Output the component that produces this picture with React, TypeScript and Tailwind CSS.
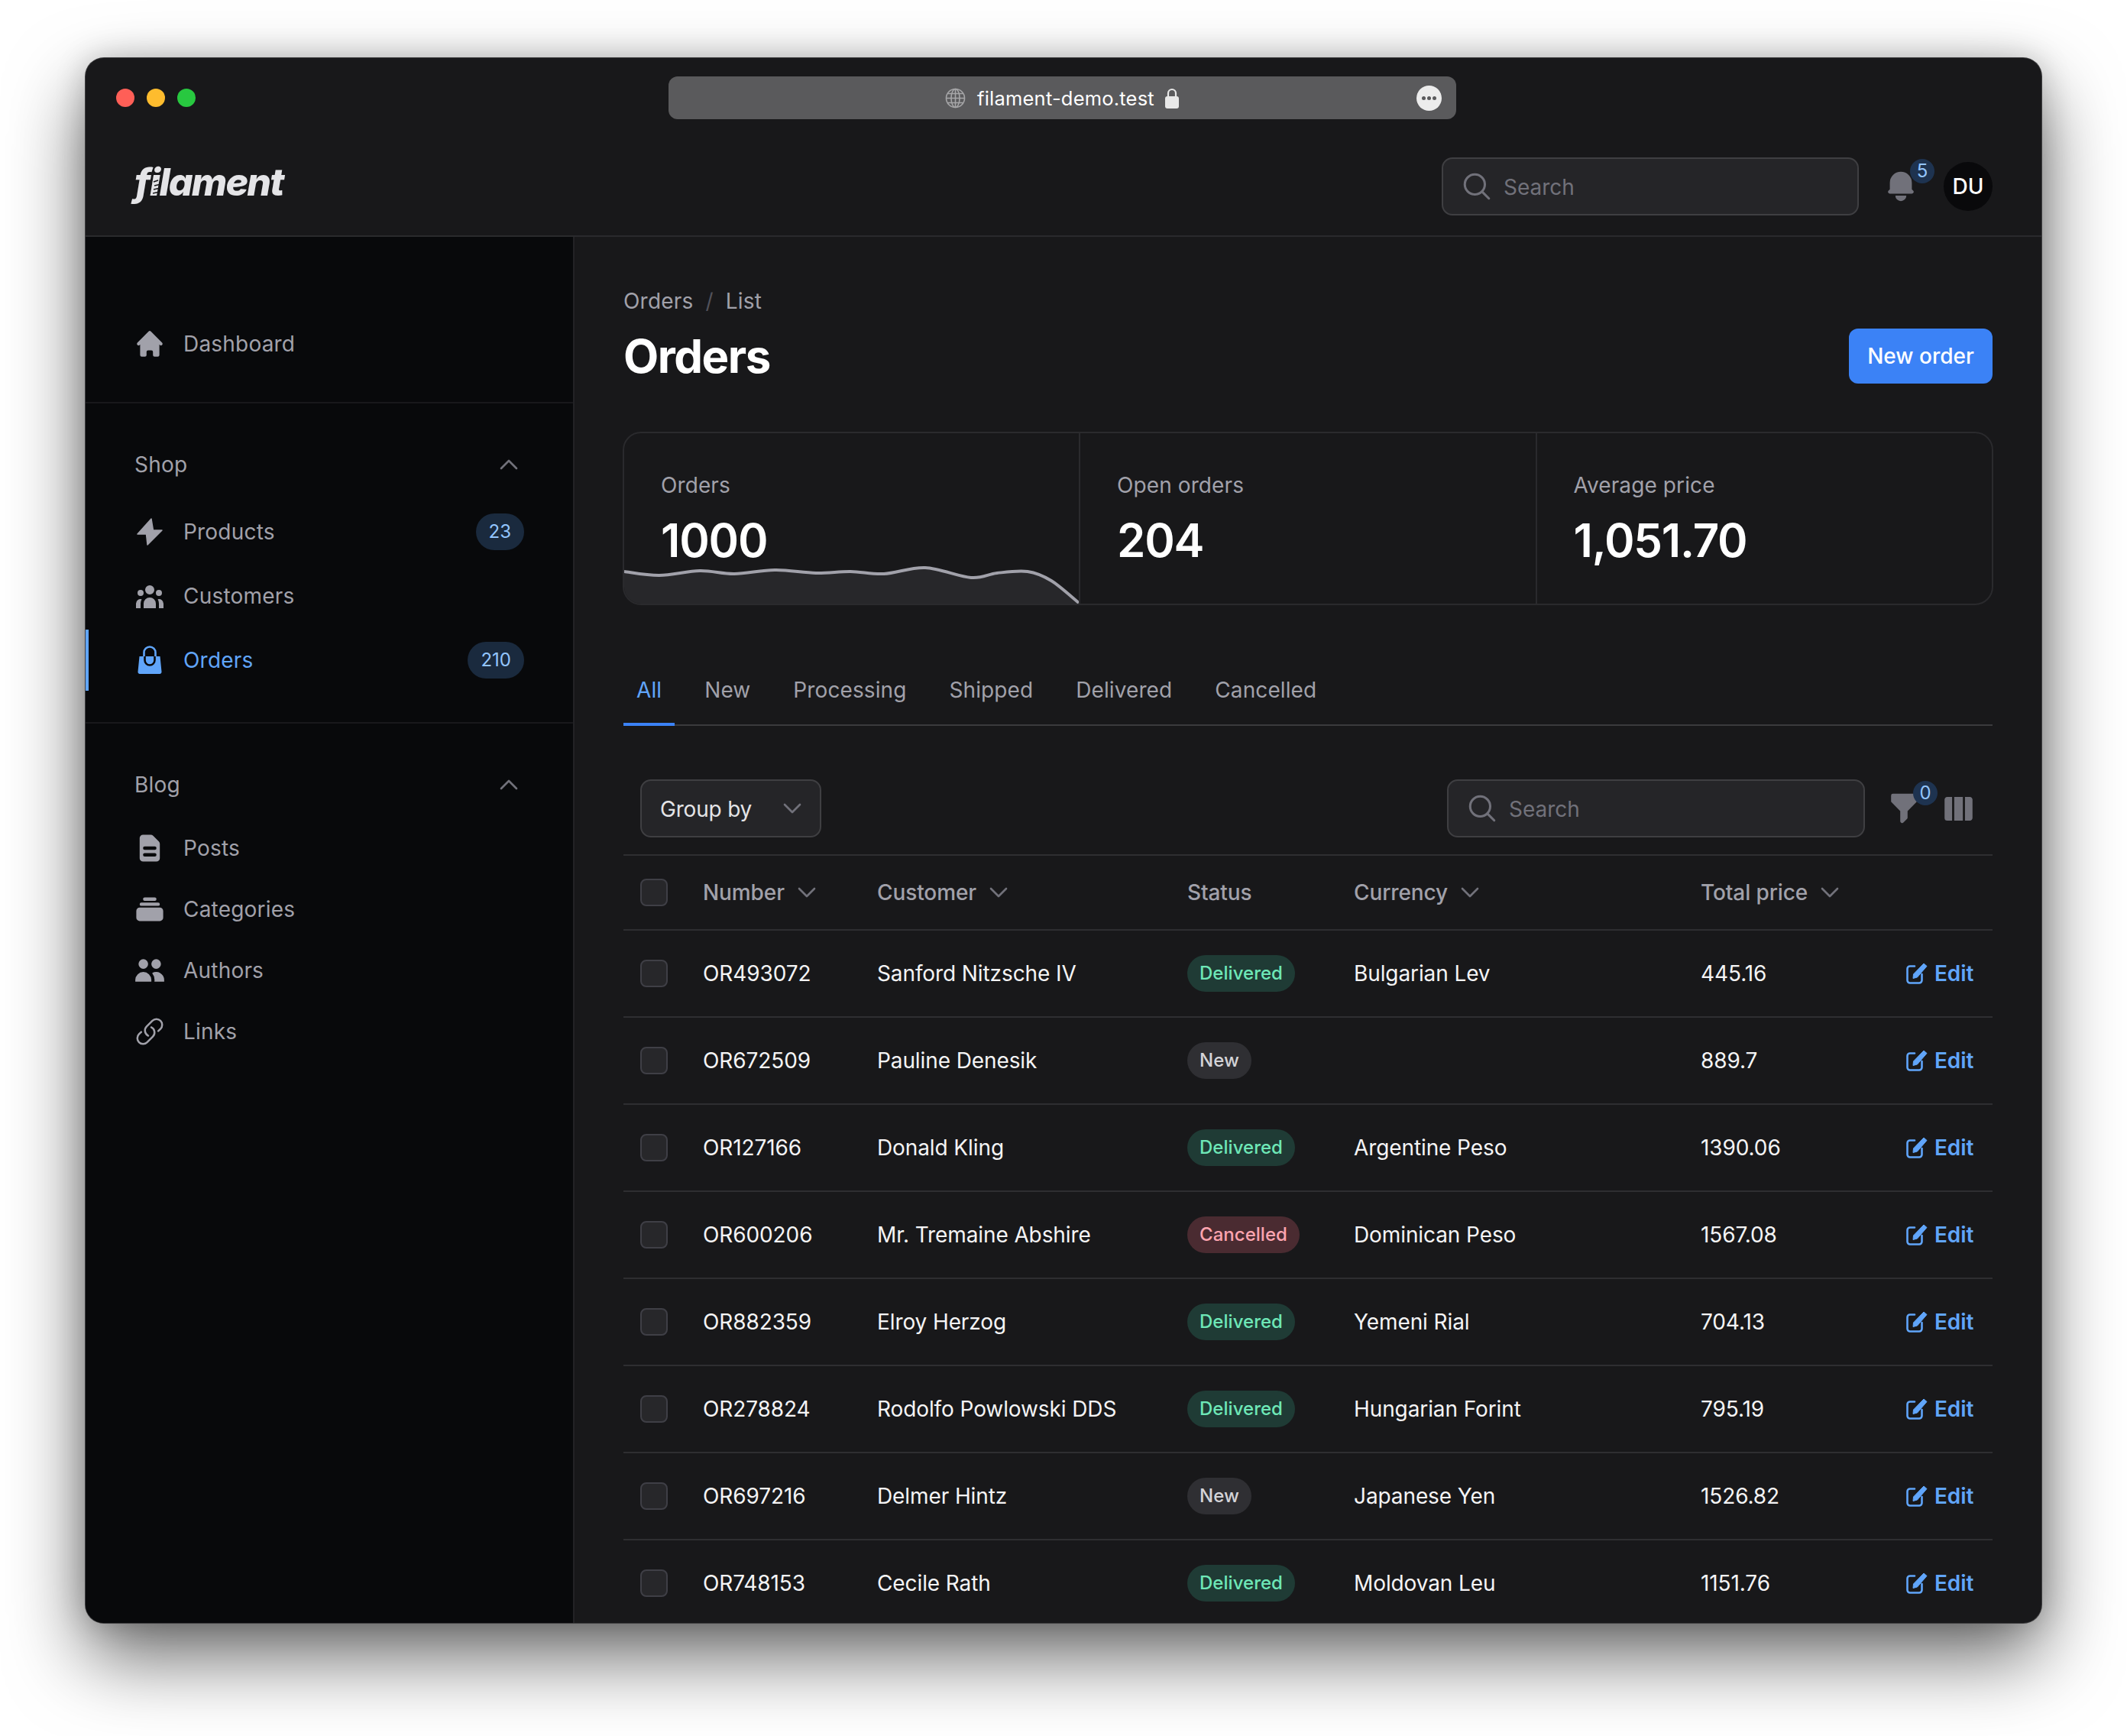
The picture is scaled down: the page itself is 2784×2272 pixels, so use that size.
import {
  HiBell,
  HiCollection,
  HiDocumentText,
  HiFilter,
  HiHome,
  HiUserGroup,
  HiUsers,
} from "react-icons/hi";
import {
  HiOutlineChevronDown,
  HiOutlineChevronUp,
  HiOutlineLink,
  HiOutlineMagnifyingGlass,
  HiViewColumns,
} from "react-icons/hi2";
import type { IconType } from "react-icons";

type Status = "Delivered" | "New" | "Cancelled";

const orders: { number: string; customer: string; status: Status; currency: string; price: string }[] = [
  { number: "OR493072", customer: "Sanford Nitzsche IV", status: "Delivered", currency: "Bulgarian Lev", price: "445.16" },
  { number: "OR672509", customer: "Pauline Denesik", status: "New", currency: "", price: "889.7" },
  { number: "OR127166", customer: "Donald Kling", status: "Delivered", currency: "Argentine Peso", price: "1390.06" },
  { number: "OR600206", customer: "Mr. Tremaine Abshire", status: "Cancelled", currency: "Dominican Peso", price: "1567.08" },
  { number: "OR882359", customer: "Elroy Herzog", status: "Delivered", currency: "Yemeni Rial", price: "704.13" },
  { number: "OR278824", customer: "Rodolfo Powlowski DDS", status: "Delivered", currency: "Hungarian Forint", price: "795.19" },
  { number: "OR697216", customer: "Delmer Hintz", status: "New", currency: "Japanese Yen", price: "1526.82" },
  { number: "OR748153", customer: "Cecile Rath", status: "Delivered", currency: "Moldovan Leu", price: "1151.76" },
];

const statusStyles: Record<Status, string> = {
  Delivered: "bg-[#1f3b35] text-[#6ee7b7]",
  New: "bg-[#2f2f33] text-[#d4d4d8]",
  Cancelled: "bg-[#4a2b31] text-[#fda4af]",
};

const tabs = ["All", "New", "Processing", "Shipped", "Delivered", "Cancelled"];

// sparkline points, in px relative to the first stat card
const sparkPoints: [number, number][] = [
  [0, 0], [46, 5], [99, -1], [144, 3], [197, -2], [251, 2], [296, 0], [340, 3],
  [394, -5], [454, 8], [488, 2], [528, 0], [559, 12], [595, 41],
];

function sparkLine() {
  const pts = sparkPoints.map(([x, y]) => [x, y + 10]);
  let d = `M${pts[0][0]} ${pts[0][1]}`;
  for (let i = 0; i < pts.length - 1; i++) {
    const p0 = pts[i - 1] ?? pts[i];
    const p1 = pts[i];
    const p2 = pts[i + 1];
    const p3 = pts[i + 2] ?? p2;
    const c1 = [p1[0] + (p2[0] - p0[0]) / 6, p1[1] + (p2[1] - p0[1]) / 6];
    const c2 = [p2[0] - (p3[0] - p1[0]) / 6, p2[1] - (p3[1] - p1[1]) / 6];
    d += ` C${c1[0]} ${c1[1]} ${c2[0]} ${c2[1]} ${p2[0]} ${p2[1]}`;
  }
  return d;
}

function BoltIcon({ size, className }: { size?: number; className?: string }) {
  return (
    <svg width={size} height={size} viewBox="0 0 40 40" className={className} fill="currentColor" stroke="currentColor" strokeWidth="1.5" strokeLinejoin="round">
      <path d="M22 3 L4 23 L15.5 23 L17 37 L36 18 L24.5 18 Z" />
    </svg>
  );
}

function BagIcon({ size, className }: { size?: number; className?: string }) {
  return (
    <svg width={size} height={size} viewBox="0 0 40 40" className={className} fill="none">
      <path d="M12.5 16 V10 a7.5 7.5 0 0 1 15 0 V16" stroke="currentColor" strokeWidth="2.6" />
      <path d="M6.5 15 H33.5 L35.5 35 a2.5 2.5 0 0 1 -2.5 3 H7 a2.5 2.5 0 0 1 -2.5 -3 Z" fill="currentColor" />
      <path d="M13.5 15 V20 a6.5 6.5 0 0 0 13 0 V15" stroke="#08090b" strokeWidth="2.6" />
    </svg>
  );
}

function EditIcon() {
  return (
    <svg width="32" height="32" viewBox="0 0 32 32" className="shrink-0">
      <path d="M14 6.5 H8 a3.5 3.5 0 0 0 -3.5 3.5 V25 a3.5 3.5 0 0 0 3.5 3.5 H20 a3.5 3.5 0 0 0 3.5 -3.5 V17" fill="none" stroke="currentColor" strokeWidth="2.6" strokeLinecap="round" />
      <path d="M26 3 L30 6.5 L17.5 21 L12 22.5 L12.5 17 Z" fill="currentColor" stroke="currentColor" strokeWidth="1" strokeLinejoin="round" />
    </svg>
  );
}

function GlobeIcon() {
  return (
    <svg width="27" height="27" viewBox="0 0 27 27" fill="none" stroke="#a6a6a8" strokeWidth="1.6" className="mr-[15px]">
      <circle cx="13.5" cy="13.5" r="12" />
      <ellipse cx="13.5" cy="13.5" rx="5.5" ry="12" />
      <path d="M13.5 1.5 V25.5 M1.5 13.5 H25.5 M3.5 7.5 H23.5 M3.5 19.5 H23.5" />
    </svg>
  );
}

function LockIcon() {
  return (
    <svg width="18" height="27" viewBox="0 0 18 27" className="ml-[14px]">
      <path d="M4 12 V7 a5 5 0 0 1 10 0 V12" fill="none" stroke="#e8e8e8" strokeWidth="2.2" />
      <rect x="0" y="11" width="18" height="16" rx="3" fill="#e8e8e8" />
    </svg>
  );
}

function NavItem({ icon: Icon, size = 42, label, badge, active }: { icon: IconType | typeof BoltIcon; size?: number; label: string; badge?: string; active?: boolean }) {
  const color = active ? "text-[#60a5fa]" : "text-[#a1a1aa]";
  return (
    <div className="relative flex h-[80px] items-center pl-[64px] pr-[64px]">
      {active && <div className="absolute left-0 top-0 h-full w-[4px] bg-[#60a5fa]" />}
      <div className="mr-[24px] flex w-[40px] justify-center">
        <Icon size={size} className={`shrink-0 ${color}`} />
      </div>
      <span className={`flex-1 text-[28px] tracking-[0.2px] ${color}`}>{label}</span>
      {badge && (
        <span className="flex h-[48px] items-center rounded-full bg-[#1a2a3e] px-[17px] text-[24px] text-[#93c5fd]">{badge}</span>
      )}
    </div>
  );
}

function GroupLabel({ label }: { label: string }) {
  return (
    <div className="flex h-[48px] items-center pl-[64px] pr-[68px]">
      <span className="flex-1 text-[28px] tracking-[0.2px] text-[#a1a1aa]">{label}</span>
      <HiOutlineChevronUp size={32} strokeWidth={2} className="text-[#71717a]" />
    </div>
  );
}

function SearchBox({ width }: { width: string }) {
  return (
    <div className={`flex h-[76px] items-center rounded-[14px] border-2 border-[#3f3f42] bg-[#252528] pl-[23px] ${width}`}>
      <HiOutlineMagnifyingGlass size={42} strokeWidth={1.75} className="mr-[14px] text-[#71717a]" />
      <span className="relative top-[1px] text-[28px] text-[#71717a]">Search</span>
    </div>
  );
}

function CountBadge({ value }: { value: string }) {
  return (
    <span className="absolute right-[-20px] top-[-12px] flex h-[32px] w-[32px] items-center justify-center rounded-full bg-[#1e3350] text-[24px] text-[#93c5fd]">
      {value}
    </span>
  );
}

function Checkbox() {
  return <div className="h-[36px] w-[36px] rounded-[8px] border-2 border-[#3f3f46] bg-[#27272a]" />;
}

function HeaderCell({ label, sort = true }: { label: string; sort?: boolean }) {
  return (
    <div className="flex items-center gap-[13px] text-[28px] font-medium tracking-[-0.1px] text-[#a1a1aa]">
      {label}
      {sort && <HiOutlineChevronDown size={32} strokeWidth={2} className="text-[#71717a]" />}
    </div>
  );
}

const gridCols = "grid grid-cols-[104px_228px_406px_218px_454px_266px_1fr] items-center border-t-2 border-[#2e2e31]";

export default function App() {
  return (
    <div className="h-[2272px] w-[2784px] overflow-hidden bg-white pl-[112px] pt-[76px] font-['Inter',sans-serif] antialiased">
      <div className="flex h-[2048px] w-[2560px] flex-col overflow-hidden rounded-[24px] bg-[#18181a] shadow-[0_0_0_1px_#3f3f41,0_44px_100px_rgba(0,0,0,0.6),0_0_40px_rgba(0,0,0,0.2)]">
        {/* browser chrome */}
        <div className="relative flex h-[104px] shrink-0 items-center justify-center">
          <div className="absolute left-[40px] flex gap-[16px]">
            <span className="h-[24px] w-[24px] rounded-full bg-[#ff5f57]" />
            <span className="h-[24px] w-[24px] rounded-full bg-[#febc2e]" />
            <span className="h-[24px] w-[24px] rounded-full bg-[#28c840]" />
          </div>
          <div className="relative ml-[-4px] flex h-[56px] w-[1031px] items-center justify-center rounded-[12px] bg-[#5a5a5c] text-[25.5px] tracking-[0.2px] text-white">
            <GlobeIcon />
            <span className="relative top-[1px]">filament-demo.test</span>
            <LockIcon />
            <span className="absolute right-[19px] flex h-[33px] w-[33px] items-center justify-center gap-[2px] rounded-full bg-[#ececec]">
              <span className="h-[5px] w-[5px] rounded-full bg-[#5a5a5c]" />
              <span className="h-[5px] w-[5px] rounded-full bg-[#5a5a5c]" />
              <span className="h-[5px] w-[5px] rounded-full bg-[#5a5a5c]" />
            </span>
          </div>
        </div>

        {/* topbar */}
        <div className="flex h-[130px] shrink-0 items-center border-b-2 border-[#2a2a2d] pl-[64px] pr-[64px]">
          <div className="flex-1">
            <span className="relative top-[-6px] text-[50px] font-extrabold italic tracking-[-1.8px] text-[#e4e4e7]">
              filament
              {/* the wavy filament in the logo's i */}
              <svg className="absolute left-[24px] top-[26px]" width="12" height="26" viewBox="0 0 12 26" fill="none" stroke="#18181a" strokeWidth="1.6">
                <path d="M1 4 L7 2 M2 9 L11 7 M1 14 L10 12 M0 19 L9 17 M0 24 L8 22" />
              </svg>
            </span>
          </div>
          <SearchBox width="w-[546px]" />
          <div className="relative ml-[31px] mr-[32px]">
            <HiBell size={48} className="text-[#71717a]" />
            <CountBadge value="5" />
          </div>
          <div className="flex h-[64px] w-[64px] items-center justify-center rounded-full bg-[#09090b] text-[28px] font-medium text-white">DU</div>
        </div>

        <div className="flex min-h-0 flex-1">
          {/* sidebar */}
          <aside className="w-[640px] shrink-0 border-r-2 border-[#222225] bg-[#08090b]">
            <div className="border-b-2 border-[#18181b] pb-[36px] pt-[100px]">
              <NavItem icon={HiHome} label="Dashboard" />
            </div>
            <div className="border-b-2 border-[#18181b] pb-[41px] pt-[56px]">
              <GroupLabel label="Shop" />
              <div className="mt-[24px] flex flex-col gap-[4px]">
                <NavItem icon={BoltIcon} size={40} label="Products" badge="23" />
                <NavItem icon={HiUserGroup} size={40} label="Customers" />
                <NavItem icon={BagIcon} size={40} label="Orders" badge="210" active />
              </div>
            </div>
            <div className="pt-[56px]">
              <GroupLabel label="Blog" />
              <div className="mt-[19px] flex flex-col">
                <NavItem icon={HiDocumentText} size={44} label="Posts" />
                <NavItem icon={HiCollection} size={44} label="Categories" />
                <NavItem icon={HiUsers} size={42} label="Authors" />
                <NavItem icon={HiOutlineLink} size={40} label="Links" />
              </div>
            </div>
          </aside>

          {/* main */}
          <main className="min-w-0 flex-1 px-[64px] pt-[64px]">
            <div className="flex h-[40px] items-center text-[28px] tracking-[0.2px] text-[#a1a1aa]">
              Orders
              <span className="mx-[16px] text-[#52525b]">/</span>
              List
            </div>
            <div className="mt-[16px] flex h-[72px] items-center justify-between">
              <h1 className="text-[60px] font-bold tracking-[-1.5px] text-white">Orders</h1>
              <button className="flex h-[72px] w-[188px] items-center justify-center rounded-[12px] bg-[#3b82f6] text-[28px] font-medium text-white">New order</button>
            </div>

            <div className="mx-[-1px] mt-[63px] grid h-[227px] grid-cols-[595px_1fr_1fr] overflow-hidden rounded-[24px] border-2 border-[#2a2a2d]">
              <Stat label="Orders" value="1000" chart />
              <Stat label="Open orders" value="204" divider />
              <Stat label="Average price" value="1,051.70" divider />
            </div>

            <div className="mt-[78px] flex h-[80px] gap-[22px] border-b-2 border-[#3a3a3d]">
              {tabs.map((tab, i) => (
                <div key={tab} className={`relative flex h-[80px] items-center px-[17px] pb-[14px] text-[28px] tracking-[0.1px] ${i === 0 ? "text-[#60a5fa]" : "text-[#a1a1aa]"}`}>
                  {tab}
                  {i === 0 && <span className="absolute bottom-0 left-0 h-[4px] w-full bg-[#3b82f6]" />}
                </div>
              ))}
            </div>

            <div className="mt-[70px] flex h-[76px] items-center pl-[22px] pr-[22px]">
              <div className="flex h-[76px] w-[237px] items-center justify-between rounded-[14px] border-2 border-[#3f3f42] bg-[#252528] pl-[24px] pr-[20px] text-[28px] tracking-[-0.2px] text-[#e4e4e7]">
                <span className="relative top-[1px]">Group by</span>
                <HiOutlineChevronDown size={32} strokeWidth={2} className="text-[#71717a]" />
              </div>
              <div className="flex-1" />
              <SearchBox width="w-[547px]" />
              <div className="relative ml-[27px] mr-[25px]">
                <HiFilter size={48} className="text-[#71717a]" />
                <CountBadge value="0" />
              </div>
              <HiViewColumns size={45} className="text-[#71717a]" />
            </div>

            <div className="mt-[22px]">
              <div className={`${gridCols} h-[98px]`}>
                <div className="pl-[22px]"><Checkbox /></div>
                <HeaderCell label="Number" />
                <HeaderCell label="Customer" />
                <HeaderCell label="Status" sort={false} />
                <HeaderCell label="Currency" />
                <HeaderCell label="Total price" />
                <div />
              </div>
              {orders.map((order) => (
                <div key={order.number} className={`${gridCols} h-[114px] text-[28px] tracking-[-0.1px] text-[#f4f4f5]`}>
                  <div className="pl-[22px]"><Checkbox /></div>
                  <div>{order.number}</div>
                  <div>{order.customer}</div>
                  <div>
                    <span className={`inline-flex h-[48px] items-center rounded-full px-[16px] text-[24px] font-medium tracking-[0.03px] ${statusStyles[order.status]}`}>{order.status}</span>
                  </div>
                  <div>{order.currency}</div>
                  <div>{order.price}</div>
                  <div className="flex items-center gap-[8px] font-semibold text-[#60a5fa]">
                    <EditIcon />
                    Edit
                  </div>
                </div>
              ))}
            </div>
          </main>
        </div>
      </div>
    </div>
  );
}

function Stat({ label, value, divider, chart }: { label: string; value: string; divider?: boolean; chart?: boolean }) {
  return (
    <div className={`relative pl-[48px] pt-[48px] ${divider ? "border-l-2 border-[#2a2a2d]" : ""}`}>
      <div className="h-[40px] text-[28px] leading-[40px] tracking-[0.1px] text-[#a1a1aa]">{label}</div>
      <div className="mt-[16px] h-[72px] text-[60px] font-semibold leading-[72px] tracking-[-1.2px] text-white">{value}</div>
      {chart && (
        <svg className="absolute bottom-0 left-0" width="595" height="52" viewBox="0 0 595 52">
          <path d={`${sparkLine()} L595 52 L0 52 Z`} fill="#27272a" />
          <path d={sparkLine()} fill="none" stroke="#a1a1aa" strokeWidth="4" />
        </svg>
      )}
    </div>
  );
}
